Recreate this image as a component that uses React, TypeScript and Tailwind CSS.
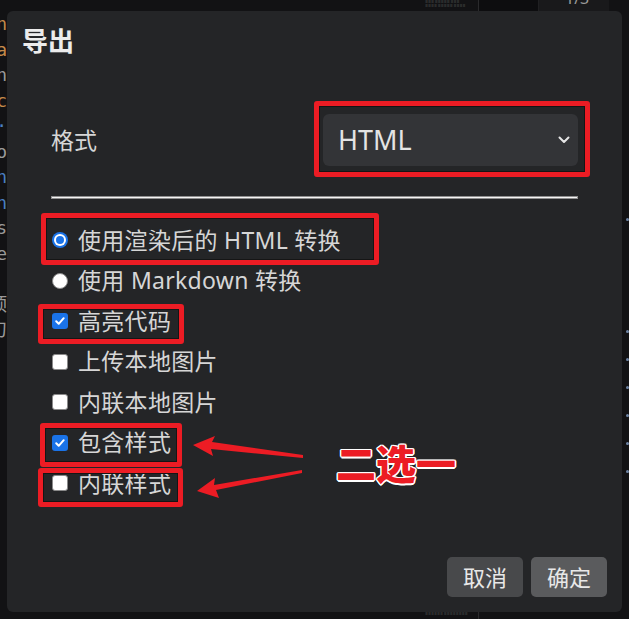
import React from "react";

type Opt = { label: string; kind: "radio" | "check"; on: boolean };

const options: Opt[] = [
  { label: "使用渲染后的 HTML 转换", kind: "radio", on: true },
  { label: "使用 Markdown 转换", kind: "radio", on: false },
  { label: "高亮代码", kind: "check", on: true },
  { label: "上传本地图片", kind: "check", on: false },
  { label: "内联本地图片", kind: "check", on: false },
  { label: "包含样式", kind: "check", on: true },
  { label: "内联样式", kind: "check", on: false },
];

// bits of the editor behind the dialog, left edge
const leftBits = [
  { t: "n", c: "text-[#c58a4a]" },
  { t: "a", c: "text-[#c58a4a]" },
  { t: "n", c: "text-[#9a9a9a]" },
  { t: "c", c: "text-[#c58a4a]" },
  { t: "·", c: "text-[#4a7fc0]" },
  { t: "o", c: "text-[#9a9a9a]" },
  { t: "n", c: "text-[#4a7fc0]" },
  { t: "n", c: "text-[#4a7fc0]" },
  { t: "s", c: "text-[#9a9a9a]" },
  { t: "e", c: "text-[#9a9a9a]" },
  { t: "", c: "" },
  { t: "顶", c: "text-[#9a9a9a]" },
  { t: "刀", c: "text-[#9a9a9a]" },
];

const Radio = ({ on }: { on: boolean }) =>
  on ? (
    <span className="w-4 h-4 rounded-full bg-[#1a73e8] flex items-center justify-center shrink-0">
      <span className="w-3 h-3 rounded-full bg-white flex items-center justify-center">
        <span className="w-2 h-2 rounded-full bg-[#1a73e8]" />
      </span>
    </span>
  ) : (
    <span className="w-4 h-4 rounded-full bg-white border border-[#8a8a8a] shrink-0" />
  );

const Check = ({ on }: { on: boolean }) =>
  on ? (
    <span className="w-4 h-4 rounded-[3px] bg-[#1a73e8] flex items-center justify-center shrink-0">
      <svg width="12" height="12" viewBox="0 0 12 12" fill="none">
        <path d="M2.2 6.3l2.5 2.5 5-5.6" stroke="white" strokeWidth="2" strokeLinecap="round" strokeLinejoin="round" />
      </svg>
    </span>
  ) : (
    <span className="w-4 h-4 rounded-[3px] bg-white border border-[#8a8a8a] shrink-0" />
  );

const RedBox = ({ cls }: { cls: string }) => (
  <div className={`absolute border-[5px] border-[#ec1c24] rounded-[3px] shadow-[inset_0_0_0_1px_#151515] ${cls}`} />
);

export default function App() {
  return (
    <div className="relative w-[629px] h-[619px] overflow-hidden bg-[#121214] font-['Noto_Sans','Noto_Sans_CJK_SC',sans-serif] text-[#d6d6d6]">
      {/* top strip of the window behind */}
      <div className="h-[11px] flex">
        <div className="w-[418px]" />
        <div className="w-[60px] flex flex-col gap-[1px] pt-[1px] pl-[7px] text-[3px] leading-[3px] text-[#777]">
          <span>≡≡≡ ≡≡≡≡≡ ≡≡≡</span>
          <span>≡≡≡≡ ≡≡≡≡≡ ≡≡≡≡</span>
        </div>
        <div className="w-[60px] border-l border-[#2a2a2c] bg-[#0d0d0f]" />
        <div className="w-[71px] bg-[#19191b] border-l border-[#202022] relative overflow-hidden">
          <span className="absolute -top-[14px] left-[26px] text-[16px] text-[#9a9a9a]">1/3</span>
        </div>
        <div className="flex-1" />
      </div>

      <div className="flex h-[601px]">
        {/* left strip */}
        <div className="w-[7px] overflow-hidden flex flex-col text-[18px] leading-[25.5px] font-['DejaVu_Sans_Mono','Noto_Sans_CJK_SC',monospace]">
          {leftBits.map((b, i) => (
            <div key={i} className="h-[25.5px] flex justify-end">
              <span className={`whitespace-nowrap ${b.c}`}>{b.t}</span>
            </div>
          ))}
        </div>

        {/* dialog */}
        <div className="w-[615px] h-[601px] rounded-[6px] bg-[#242527] flex flex-col">
          <div className="pt-[13px] px-[15px] text-[26px] leading-[34px] font-bold text-[#ececec]">导出</div>

          <div className="mt-[56px] mx-[44px] h-[52px] flex items-center justify-between">
            <span className="text-[23px]">格式</span>
            <div className="w-[255px] h-[52px] rounded-[6px] bg-[#333437] flex items-center justify-between pl-[15px] pr-[8px]">
              <span className="text-[27px] text-[#e4e4e4]">HTML</span>
              <svg width="12" height="8" viewBox="0 0 12 8" fill="none">
                <path d="M1.5 1.5l4.5 4.5 4.5-4.5" stroke="#e6e6e6" strokeWidth="2" strokeLinecap="round" strokeLinejoin="round" />
              </svg>
            </div>
          </div>

          <div className="mt-[30px] mx-[44px] h-[3px] border border-[#8f8f8f] bg-[#f4f4f4]" />

          <div className="mt-[21px] flex flex-col">
            {options.map((o) => (
              <div key={o.label} className="h-[40.5px] flex items-center gap-[10px] pl-[45px] text-[23px] leading-none tracking-[0.3px]">
                {o.kind === "radio" ? <Radio on={o.on} /> : <Check on={o.on} />}
                <span>{o.label}</span>
              </div>
            ))}
          </div>

          <div className="mt-auto flex justify-end gap-[8px] px-[15px] pb-[15px]">
            <button className="w-[76px] h-[40px] rounded-[5px] bg-[#48494b] text-[22px] text-[#e8e8e8]">取消</button>
            <button className="w-[76px] h-[40px] rounded-[5px] bg-[#5a5b5d] text-[22px] text-[#e8e8e8]">确定</button>
          </div>
        </div>

        {/* right strip */}
        <div className="w-[7px] flex flex-col pl-[4px]">
          <div className="h-[207px]" />
          {[0, 112, 28, 28, 28, 28, 28].map((g, i) => (
            <div key={i} className="w-[3px] h-[3px] rounded-full bg-[#6f86a6]" style={{ marginTop: i === 0 ? 0 : g - 3 }} />
          ))}
        </div>
      </div>

      <div className="h-[7px] flex">
        <div className="w-[425px]" />
        <div className="w-[53px] text-[3px] leading-[3px] text-[#777] pt-[1px]">≡≡≡≡≡≡ ≡≡≡≡≡≡≡≡</div>
        <div className="w-px bg-[#2a2a2c]" />
      </div>

      {/* annotations */}
      <RedBox cls="left-[314px] top-[101px] w-[276px] h-[76px]" />
      <RedBox cls="left-[41px] top-[213px] w-[338px] h-[52px]" />
      <RedBox cls="left-[38px] top-[304px] w-[146px] h-[40px]" />
      <RedBox cls="left-[40px] top-[423px] w-[142px] h-[44px]" />
      <RedBox cls="left-[38px] top-[468px] w-[145px] h-[39px]" />

      <svg className="absolute left-0 top-0" width="629" height="619" viewBox="0 0 629 619">
        <polygon points="193,445 215,436 212,442 303,455 303,458 211,449 213,456" fill="#ec1c24" />
        <polygon points="197,491 215,478 214,485 302,470 302,473 216,490 219,498" fill="#ec1c24" />
      </svg>

      <div className="absolute left-[336px] top-[436px] text-[40px] leading-[52px] font-black text-[#ec1c24] [text-shadow:1.5px_0_0_#fff,-1.5px_0_0_#fff,0_1.5px_0_#fff,0_-1.5px_0_#fff,1px_1px_0_#fff,-1px_-1px_0_#fff,1px_-1px_0_#fff,-1px_1px_0_#fff] font-['Noto_Sans_CJK_SC',sans-serif]">
        二选一
      </div>
    </div>
  );
}
